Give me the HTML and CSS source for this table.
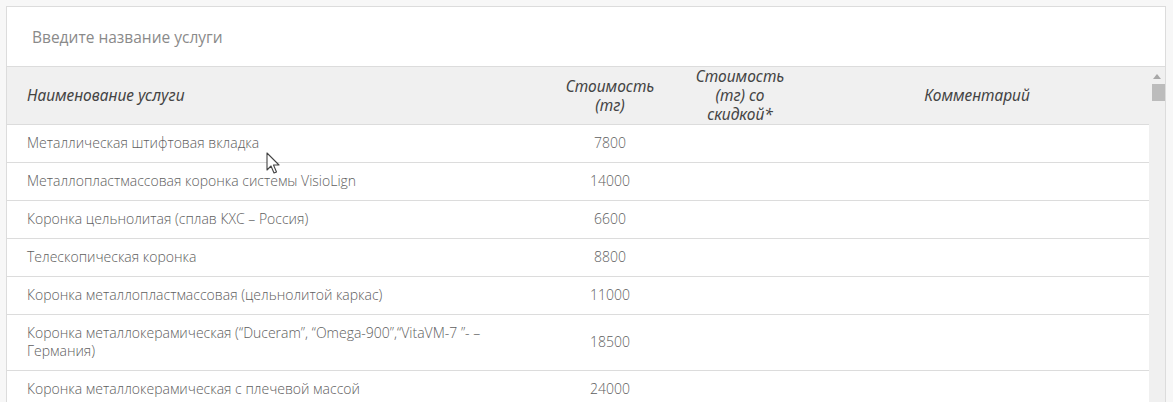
FILE: index.html
```html
<!DOCTYPE html>
<html lang="ru">
<head>
<meta charset="utf-8">
<title>Прайс</title>
<link rel="stylesheet" href="styles.css">
</head>
<body>
<div class="page">
  <div class="panel">
    <div class="search">
      <input class="search-input" type="text" placeholder="Введите название услуги">
    </div>
    <div class="scroll-area">
      <div class="table-wrap">
        <table class="price">
          <colgroup>
            <col class="c-name"><col class="c-cost"><col class="c-disc"><col class="c-comm">
          </colgroup>
          <thead>
            <tr>
              <th class="th-name">Наименование услуги</th>
              <th>Стоимость (тг)</th>
              <th>Стоимость (тг) со скидкой*</th>
              <th>Комментарий</th>
            </tr>
          </thead>
          <tbody>
            <tr><td class="name">Металлическая штифтовая вкладка</td><td class="num">7800</td><td></td><td></td></tr>
            <tr><td class="name">Металлопластмассовая коронка системы VisioLign</td><td class="num">14000</td><td></td><td></td></tr>
            <tr><td class="name">Коронка цельнолитая (сплав КХС – Россия)</td><td class="num">6600</td><td></td><td></td></tr>
            <tr><td class="name">Телескопическая коронка</td><td class="num">8800</td><td></td><td></td></tr>
            <tr><td class="name">Коронка металлопластмассовая (цельнолитой каркас)</td><td class="num">11000</td><td></td><td></td></tr>
            <tr><td class="name">Коронка металлокерамическая (“Duceram”, “Omega-900”,“VitaVM-7 ”- – Германия)</td><td class="num">18500</td><td></td><td></td></tr>
            <tr><td class="name">Коронка металлокерамическая с плечевой массой</td><td class="num">24000</td><td></td><td></td></tr>
          </tbody>
        </table>
      </div>
      <div class="scrollbar">
        <span class="arrow"></span>
        <span class="thumb"></span>
      </div>
    </div>
  </div>
  <svg class="cursor" width="15" height="23" viewBox="0 0 15 23"><path d="M1 1 L1 18 L5 14 L8 21 L10.5 20 L7.5 13 L13 13 Z" fill="#fff" stroke="#444" stroke-width="1.1" stroke-linejoin="round"/></svg>
</div>
</body>
</html>
```
FILE: styles.css
```css
html, body {
  margin: 0;
  padding: 0;
  background: #f7f7f7;
  height: 100%;
  overflow: hidden;
}
.page {
  position: relative;
  padding: 6px 7px 0 6px;
  font-family: "Open Sans", "Noto Sans", sans-serif;
}
.panel {
  border: 1px solid #dcdcdc;
  border-bottom: none;
  background: #fff;
}
.search {
  height: 59px;
  border-bottom: 1px solid #dcdcdc;
  display: flex;
  align-items: center;
  padding-left: 25px;
}
.search-input {
  border: none;
  outline: none;
  background: transparent;
  font-family: "Open Sans", "Noto Sans", sans-serif;
  font-size: 15.5px;
  color: #555;
  width: 600px;
  padding: 0;
}
.search-input::placeholder {
  color: #8a8a8a;
}
.scroll-area {
  display: flex;
  height: 340px;
}
.table-wrap {
  flex: 1;
}
.price {
  width: 100%;
  border-collapse: collapse;
  table-layout: fixed;
}
.c-name { width: 538px; }
.c-cost { width: 130px; }
.c-disc { width: 130px; }
.c-comm { width: auto; }
.price th {
  background: #f0f0f0;
  font-family: "Noto Sans", sans-serif;
  font-style: italic;
  font-weight: 400;
  font-size: 15.5px;
  line-height: 19px;
  color: #444;
  padding: 0 18px;
  height: 57px;
  text-align: center;
  border-bottom: 1px solid #dcdcdc;
}
.price th.th-name {
  text-align: left;
  padding-left: 20px;
}
.price td {
  font-size: 14px;
  font-weight: 300;
  color: #5e5e5e;
  line-height: 18px;
  padding: 9px 20px 10px;
  border-bottom: 1px solid #dcdcdc;
  vertical-align: middle;
}
.price td.name {
  padding-right: 40px;
}
.price td.num {
  text-align: center;
}
.scrollbar {
  width: 16px;
  background: #f0f0f0;
  display: flex;
  flex-direction: column;
  align-items: center;
}
.arrow {
  margin-top: 7px;
  width: 0;
  height: 0;
  border-left: 4px solid transparent;
  border-right: 4px solid transparent;
  border-bottom: 5px solid #a8a8a8;
}
.thumb {
  margin-top: 5px;
  margin-left: 2px;
  width: 13px;
  height: 17px;
  background: #bcbcbc;
}
.cursor {
  position: absolute;
  left: 266px;
  top: 152px;
}
```
